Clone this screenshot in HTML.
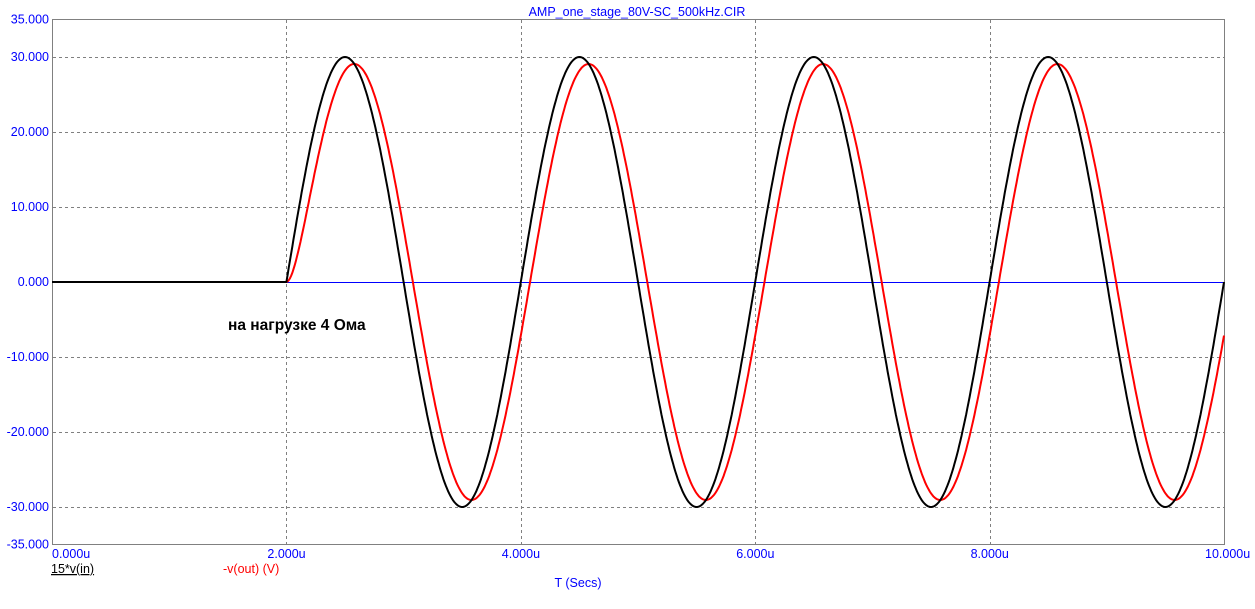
<!DOCTYPE html>
<html><head><meta charset="utf-8"><style>
body{margin:0;background:#fff;width:1255px;height:604px;overflow:hidden}
svg text{font-family:"Liberation Sans",sans-serif;font-size:12.5px}
</style></head><body>
<svg id="s" width="1255" height="604" xmlns="http://www.w3.org/2000/svg">
<g stroke="#808080" stroke-dasharray="3,3" stroke-width="1" id="grid"></g>
<rect x="52.5" y="19.5" width="1172" height="525" fill="none" stroke="#808080"/>
<line x1="52" y1="282.5" x2="1224" y2="282.5" stroke="#0000ff"/>
<path id="red" fill="none" stroke="#ff0000" stroke-width="2"/>
<path id="blk" fill="none" stroke="#000" stroke-width="2"/>
<g fill="#0000ff" text-anchor="end" id="yl"></g>
<g fill="#0000ff" id="xl"></g>
<text x="637" y="16" fill="#0000ff" text-anchor="middle">AMP_one_stage_80V-SC_500kHz.CIR</text>
<text x="578" y="587" fill="#0000ff" text-anchor="middle">T (Secs)</text>
<text x="51" y="573" fill="#000" text-decoration="underline">15*v(in)</text>
<text x="223" y="573" fill="#ff0000">-v(out) (V)</text>
<text x="228" y="330" fill="#000" style="font-weight:bold;font-size:15.5px">на нагрузке 4 Ома</text>
</svg>
<script>
var ns="http://www.w3.org/2000/svg",g=document.getElementById('grid'),yl=document.getElementById('yl'),xl=document.getElementById('xl');
function X(t){return 52+t*117.2}function Y(v){return 282+(-v)*7.5}
for(var i=1;i<5;i++){var l=document.createElementNS(ns,'line');var x=Math.round(X(2*i))+.5;l.setAttribute('x1',x);l.setAttribute('x2',x);l.setAttribute('y1',20);l.setAttribute('y2',544);g.appendChild(l);}
[30,20,10,-10,-20,-30].forEach(function(v){var l=document.createElementNS(ns,'line');var y=Math.round(Y(v))+.5;l.setAttribute('x1',53);l.setAttribute('x2',1224);l.setAttribute('y1',y);l.setAttribute('y2',y);g.appendChild(l);});
[35,30,20,10,0,-10,-20,-30,-35].forEach(function(v){var t=document.createElementNS(ns,'text');t.setAttribute('x',49);t.setAttribute('y',Y(v)+4);t.textContent=v.toFixed(3);yl.appendChild(t);});
[0,2,4,6,8,10].forEach(function(v){var t=document.createElementNS(ns,'text');t.setAttribute('x',v==0?52:X(v)-19);t.setAttribute('y',558);t.textContent=v.toFixed(3)+'u';xl.appendChild(t);});
function b(t){return t>2?30*Math.sin(Math.PI*(t-2)):0}
var sb='',sr='',y=0,tau=0.0818,dt=0.001,k=0;
for(var i=0;i<=10000;i++){var t=i*dt;var v=b(t);y+=(v-y)*dt/tau;
 if(i%10==0){sb+=(sb?'L':'M')+X(t).toFixed(1)+' '+Y(v).toFixed(1);sr+=(sr?'L':'M')+X(t).toFixed(1)+' '+Y(y).toFixed(1);}}
document.getElementById('blk').setAttribute('d',sb);
document.getElementById('red').setAttribute('d',sr);
</script>
</body></html>
